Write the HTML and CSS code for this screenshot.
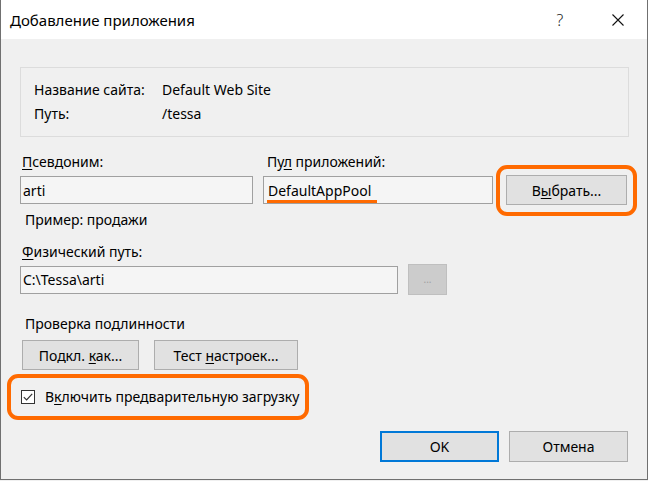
FILE: index.html
```html
<!DOCTYPE html>
<html lang="ru">
<head>
  <meta charset="UTF-8">
  <title>Добавление приложения</title>
  <link rel="stylesheet" href="styles.css">
</head>
<body>
  <div class="dialog">
    <div class="title-bar">
      <span class="title">Добавление приложения</span>
      <span class="caption-btn help">?</span>
      <span class="caption-btn">
        <svg width="12" height="12" viewBox="0 0 12 12"><path d="M0.5 0.5L11.5 11.5M11.5 0.5L0.5 11.5" stroke="#111" stroke-width="1.1" fill="none"/></svg>
      </span>
    </div>

    <div class="content">
      <!-- сведения о сайте -->
      <div class="site-info">
        <span>Название сайта:</span><span>Default Web Site</span>
        <span>Путь:</span><span>/tessa</span>
      </div>

      <!-- псевдоним и пул -->
      <div class="alias-grid">
        <label class="field-label"><u>П</u>севдоним:</label>
        <label class="field-label pool-label">Пу<u>л</u> приложений:</label>
        <span></span>
        <div class="text-box">arti</div>
        <div class="text-box pool-box"><span class="marked">DefaultAppPool</span></div>
        <button class="btn btn-select highlight">В<u>ы</u>брать...</button>
      </div>
      <div class="hint">Пример: продажи</div>

      <!-- физический путь -->
      <label class="field-label path-label"><u>Ф</u>изический путь:</label>
      <div class="path-row">
        <div class="text-box path-box">C:\Tessa\arti</div>
        <button class="btn btn-browse" disabled>...</button>
      </div>

      <!-- проверка подлинности -->
      <div class="section-title">Проверка подлинности</div>
      <div class="auth-row">
        <button class="btn btn-connect">Подкл. <u>к</u>ак...</button>
        <button class="btn btn-test">Тест <u>н</u>астроек...</button>
      </div>

      <label class="check-row highlight">
        <svg width="14" height="14" viewBox="0 0 14 14"><rect x="0.5" y="0.5" width="13" height="13" fill="#fff" stroke="#333"/><path d="M2.8 7.2L5.6 10L11.2 3.8" stroke="#333" stroke-width="1.2" fill="none"/></svg>
        <span>В<u>к</u>лючить предварительную загрузку</span>
      </label>

      <div class="footer">
        <button class="btn btn-ok">OK</button>
        <button class="btn btn-cancel">Отмена</button>
      </div>
    </div>
  </div>
</body>
</html>
```

FILE: styles.css
```css
/* общие настройки */
* {
  box-sizing: border-box;
}

body {
  margin: 0;
  background-color: #f0f0f0;
  font-family: "Noto Sans", "Segoe UI", sans-serif;
  font-size: 14px;
  color: #000;
}

u {
  text-underline-offset: 2px;
}

/* окно диалога */
.dialog {
  width: 648px;
  height: 480px;
  background-color: #f0f0f0;
  border: 1px solid #707070;
  border-top: none;
}

/* заголовок окна */
.title-bar {
  height: 39px;
  background-color: #fff;
  display: flex;
  align-items: center;
}

.title {
  flex: 1;
  padding-left: 9px;
  font-size: 15px;
}

.caption-btn {
  width: 58px;
  height: 39px;
  display: flex;
  align-items: center;
  justify-content: center;
}

.help {
  font-size: 16px;
  font-weight: 300;
  color: #222;
}

/* содержимое */
.content {
  padding: 28px 17px 0 19px;
  line-height: 19px;
}

.site-info {
  width: 609px;
  border: 1px solid #dcdcdc;
  padding: 12px 12px 13px 13px;
  display: grid;
  grid-template-columns: 128px 1fr;
  row-gap: 5px;
}

/* поля ввода */
.alias-grid {
  margin-top: 15px;
  display: grid;
  grid-template-columns: 233px 230px 124px;
  column-gap: 10px;
  row-gap: 4px;
  align-items: center;
}

.field-label {
  display: block;
  padding-left: 2px;
}

.pool-label {
  padding-left: 4px;
}

.text-box {
  height: 28px;
  background-color: #f5f5f5;
  border: 1px solid #a0a0a0;
  padding: 0 2px;
  display: flex;
  align-items: center;
  white-space: nowrap;
}

.pool-box {
  padding-left: 3px;
}

/* подчёркивание имени пула */
.marked {
  border-bottom: 3px solid #ff6a00;
  line-height: 17px;
  padding: 0 6px 1px 1px;
  margin-top: 4px;
}

.hint {
  margin-top: 5px;
  padding-left: 5px;
}

.path-label {
  margin-top: 13px;
}

.path-row {
  margin-top: 3px;
  display: flex;
  align-items: center;
  gap: 10px;
}

.path-box {
  width: 378px;
}

.section-title {
  margin-top: 19px;
  padding-left: 5px;
}

.auth-row {
  margin-top: 7px;
  display: flex;
  gap: 15px;
  padding-left: 2px;
}

/* кнопки */
.btn {
  font: inherit;
  color: #000;
  background-color: #e1e1e1;
  border: 1px solid #adadad;
  height: 30px;
  padding: 0;
}

.btn-select {
  width: 121px;
  justify-self: end;
}

.btn-browse {
  width: 39px;
  height: 31px;
  background-color: #cccccc;
  border-color: #bfbfbf;
  color: #a0a0a0;
  font-size: 10px;
}

.btn-connect {
  width: 117px;
}

.btn-test {
  width: 144px;
}

.btn-ok,
.btn-cancel {
  width: 119px;
  height: 31px;
}

.btn-ok {
  border: 2px solid #0078d7;
}

/* оранжевая рамка-выделение */
.highlight {
  position: relative;
}

.highlight::after {
  content: "";
  position: absolute;
  border: 4px solid #ff6a00;
  border-radius: 11px;
  pointer-events: none;
}

.btn-select::after {
  inset: -11px -11px -12px -11px;
}

/* флажок */
.check-row {
  margin-top: 17px;
  display: flex;
  align-items: center;
  gap: 10px;
  width: 290px;
  padding-left: 1px;
}

.check-row::after {
  inset: -13px 1px -14px -13px;
}

.footer {
  margin-top: 25px;
  display: flex;
  justify-content: flex-end;
  gap: 10px;
  padding-right: 2px;
}
```
